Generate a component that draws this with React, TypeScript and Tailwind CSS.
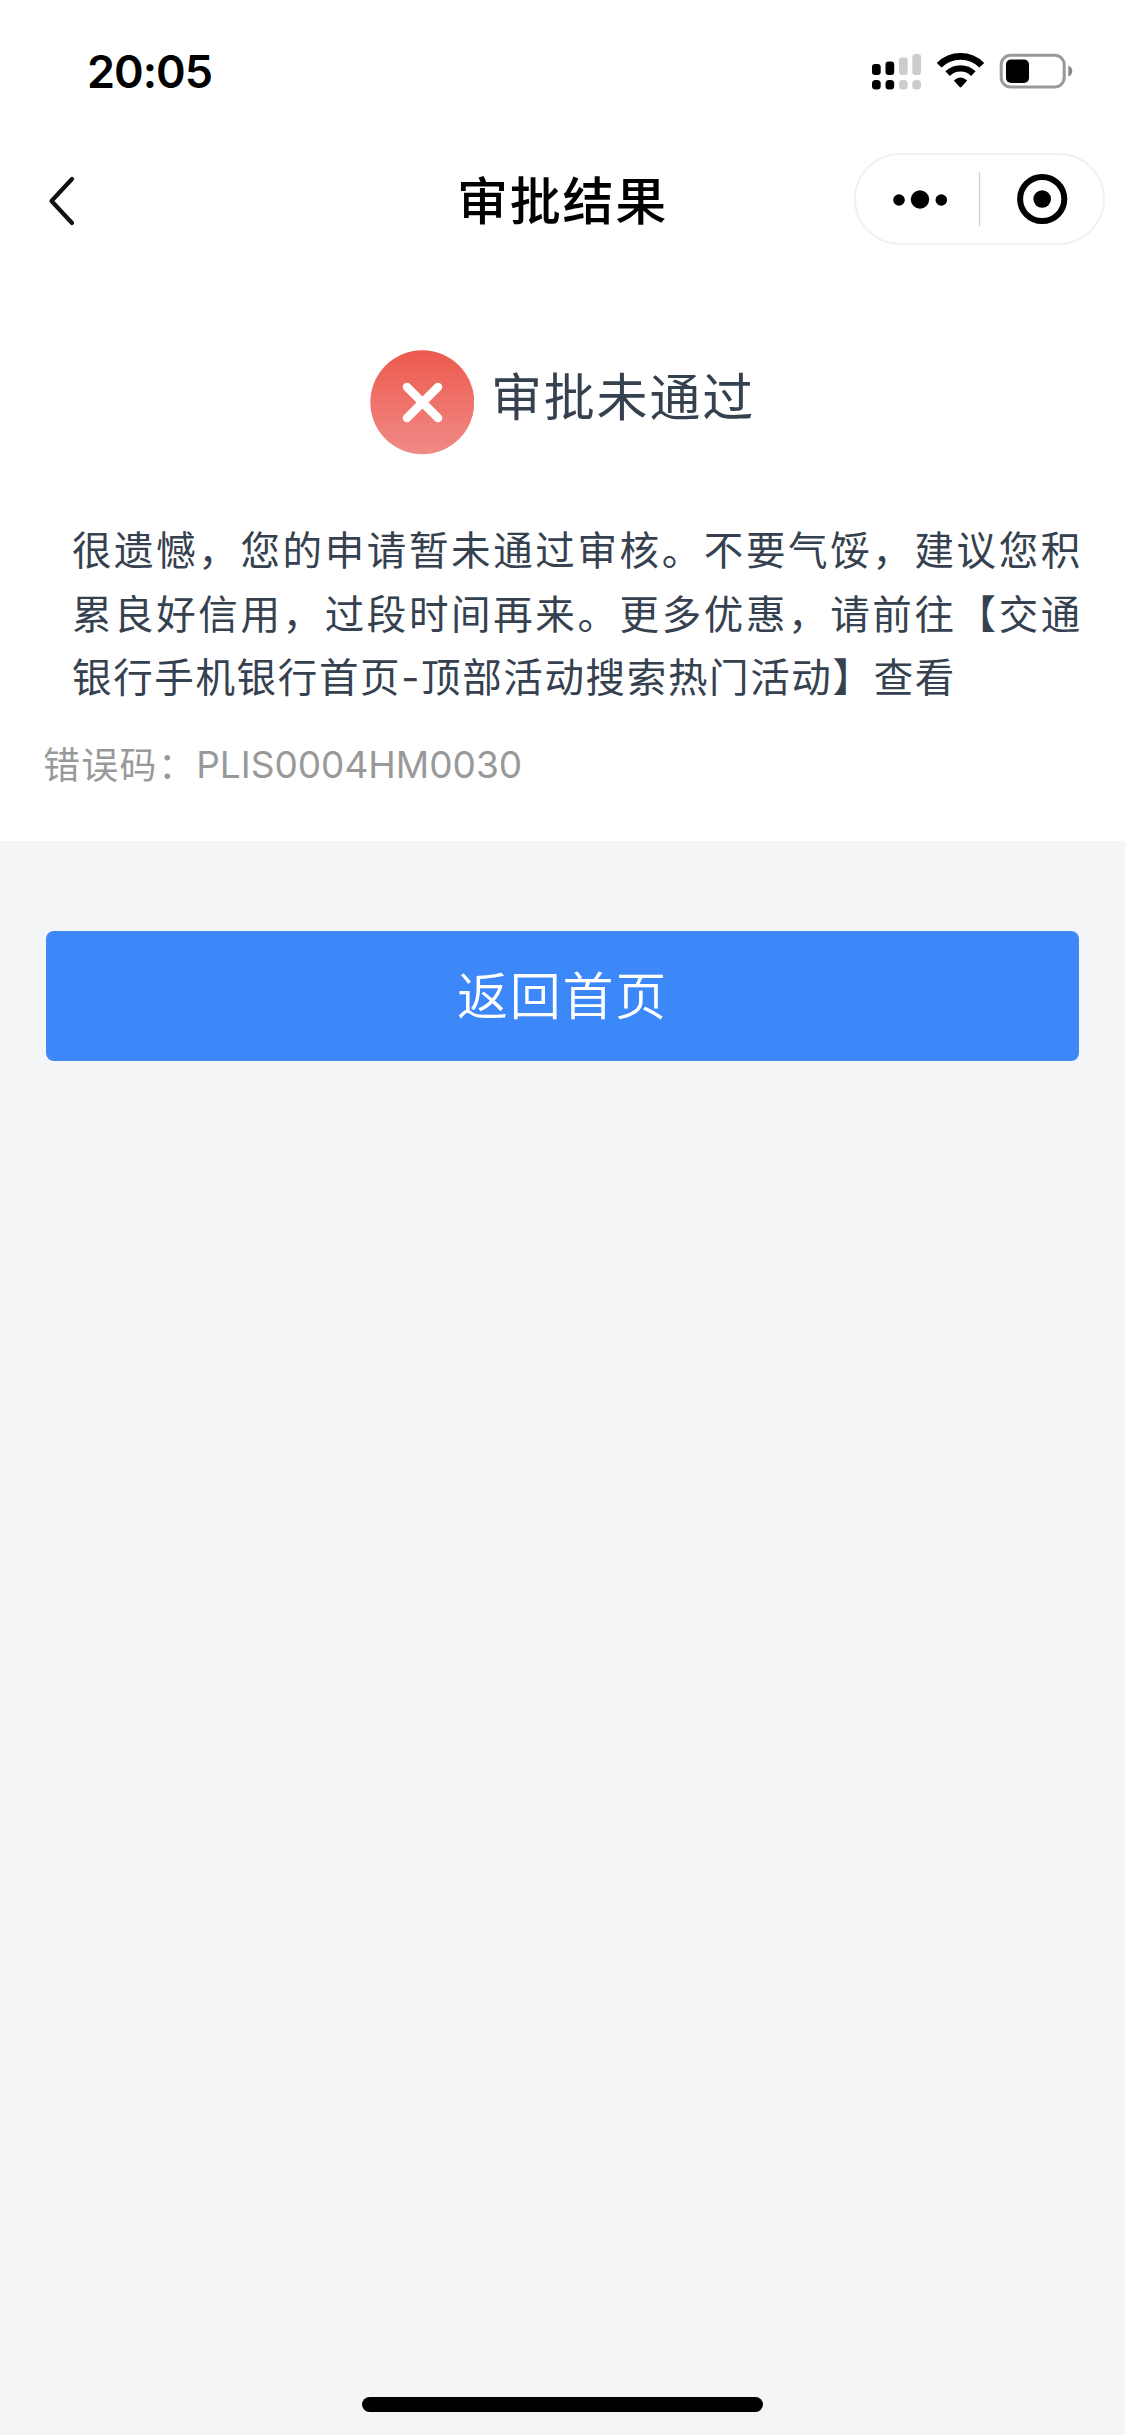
function StatusIcons() {
  const bars = [
    { x: 2, y: 14, height: 11, color: '#000000' },
    { x: 15.5, y: 11.5, height: 13.5, color: '#000000' },
    { x: 29, y: 7.5, height: 17.5, color: '#cccccc' },
    { x: 42.3, y: 4, height: 21, color: '#cccccc' },
  ];

  return (
    <svg width="206" height="44" viewBox="0 0 206 44" fill="none">
      {/* Dual SIM signal */}
      {bars.map((bar) => (
        <g key={bar.x} fill={bar.color}>
          <rect x={bar.x} y={bar.y} width="8.7" height={bar.height} rx="3" />
          <rect x={bar.x} y="30" width="8.7" height="9.5" rx="3.5" />
        </g>
      ))}

      {/* Wifi */}
      <path d="M69.2 15.2A30 30 0 0 1 111.8 15.2" stroke="#000" strokeWidth="6.6" />
      <path d="M77.6 23.6A18.5 18.5 0 0 1 103.4 23.6" stroke="#000" strokeWidth="6.4" />
      <path d="M83.8 30.6Q90.5 24.6 97.2 30.6L91.4 37Q90.5 37.9 89.6 37Z" fill="#000" />

      {/* Battery */}
      <rect x="131.2" y="5.2" width="63" height="31.8" rx="9.5" stroke="#999" strokeWidth="3" />
      <rect x="136" y="9.5" width="23" height="23.5" rx="5" fill="#000" />
      <path d="M198.3 15.8Q202.2 17.2 202.2 21.2Q202.2 25.2 198.3 26.6Z" fill="#888" />
    </svg>
  );
}

function StatusBar() {
  return (
    <div className="flex h-[143px] items-start justify-between pl-[87px] pr-[49px]">
      <span className="mt-[44px] font-['Inter',sans-serif] text-[45px] leading-[55px] font-semibold tracking-[-1px]">20:05</span>
      <div className="mt-[50px]">
        <StatusIcons />
      </div>
    </div>
  );
}

function NavBar() {
  return (
    <header className="grid h-[112px] grid-cols-3 items-center">
      <button className="ml-[44px] w-fit" aria-label="返回">
        <svg width="34" height="56" viewBox="0 0 34 56" fill="none" className="mt-[4px]">
          <path d="M28 6L7.5 28L28 50" stroke="#111" strokeWidth="4.2" strokeLinecap="round" strokeLinejoin="round" />
        </svg>
      </button>
      <h1 className="mb-[2px] text-center text-[51px] leading-[72px] font-medium tracking-[1.8px] whitespace-nowrap">审批结果</h1>
      <div className="mr-[20px] flex h-[92px] w-[251px] items-center justify-self-end rounded-full border-2 border-[#f1f1f1]">
        <svg width="247" height="88" viewBox="0 0 247 88">
          <circle cx="43" cy="45" r="5.8" />
          <circle cx="64" cy="44.5" r="9.2" />
          <circle cx="85.3" cy="45" r="5.8" />
          <path d="M123.5 17V71" stroke="#d2d2d2" strokeWidth="1.3" />
          <circle cx="186.2" cy="44" r="22.1" fill="none" stroke="#000" strokeWidth="6" />
          <circle cx="186.2" cy="44" r="8.8" />
        </svg>
      </div>
    </header>
  );
}

function RejectedIcon() {
  return (
    <svg width="104" height="105" viewBox="0 0 104 105">
      <defs>
        <linearGradient id="rejected" x1="0" y1="0" x2="0" y2="1">
          <stop offset="0" stopColor="#ed5a4e" />
          <stop offset="1" stopColor="#f08a86" />
        </linearGradient>
      </defs>
      <circle cx="52.3" cy="52.3" r="52" fill="url(#rejected)" />
      <path d="M37 37L68 68M68 37L37 68" stroke="#fff" strokeWidth="8.5" strokeLinecap="round" />
    </svg>
  );
}

export default function App() {
  return (
    <div className="flex h-[2435px] w-[1125px] flex-col bg-[#f3f5f7] font-['Noto_Sans_CJK_SC',sans-serif] text-black">
      <div className="h-[841px] bg-white">
        <StatusBar />
        <NavBar />

        {/* Result */}
        <section className="pt-[95px]">
          <div className="flex items-start pl-[370px]">
            <RejectedIcon />
            <h2 className="mt-[8px] ml-[17px] text-[51px] leading-[72px] tracking-[1.8px] text-[#36414f]">审批未通过</h2>
          </div>
          <p className="mt-[65px] ml-[72px] w-[1010px] text-justify font-['Inter','Noto_Sans_CJK_SC',sans-serif] text-[39.5px] leading-[63.5px] tracking-[1.65px] text-[#36414f]">
            很遗憾，您的申请暂未通过审核。不要气馁，建议您积累良好信用，过段时间再来。更多优惠，请前往【交通银行手机银行首页-顶部活动搜索热门活动】查看
          </p>
          <p className="mt-[27px] ml-[43px] flex text-[37px] leading-[54px] tracking-[1.3px] text-[#999]">
            <span className="-mt-[2px]">错误码：</span>
            <span className="font-['Inter',sans-serif] tracking-normal">PLIS0004HM0030</span>
          </p>
        </section>
      </div>

      <button className="mx-[46px] mt-[90px] h-[130px] rounded-[8px] bg-[#3d88f8] pb-[5px] text-[51px] font-[350] tracking-[1.8px] text-white">
        返回首页
      </button>

      {/* Home indicator */}
      <div className="mx-auto mt-auto mb-[23px] h-[15px] w-[401px] rounded-full bg-black"></div>
    </div>
  );
}
